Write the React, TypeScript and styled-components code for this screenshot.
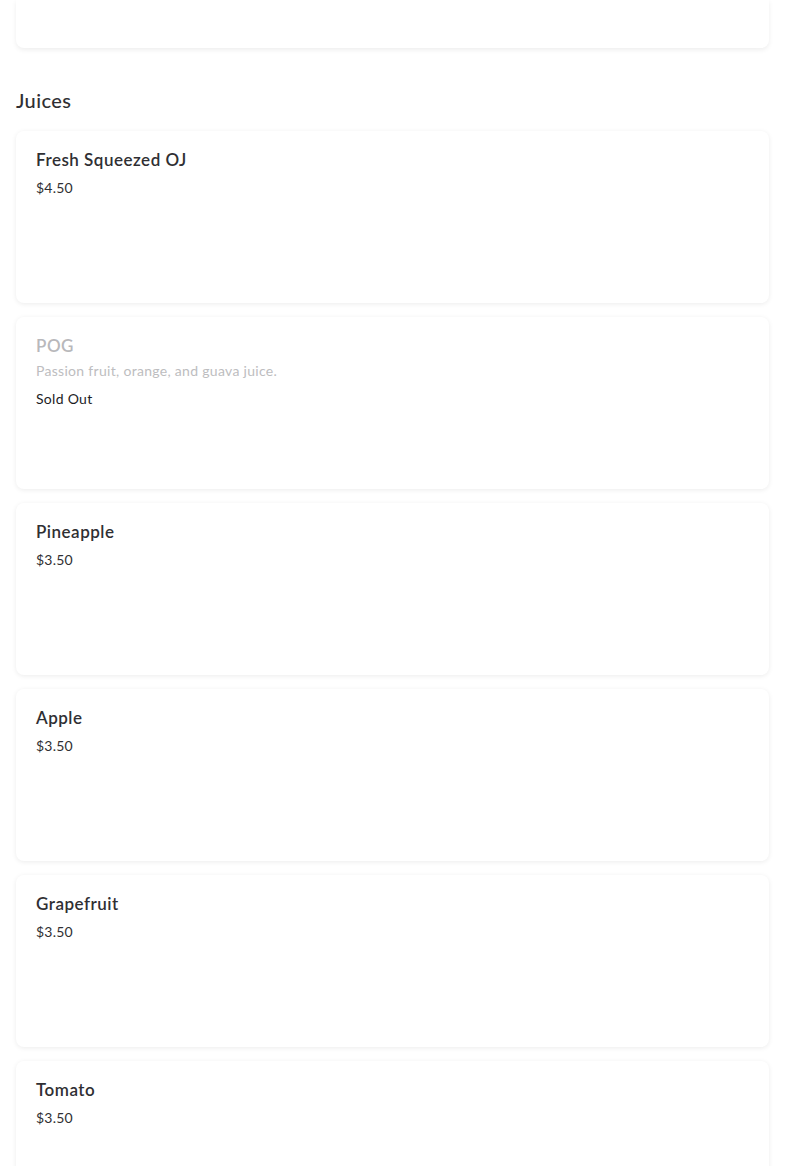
import React from "react";
import styled, { createGlobalStyle } from "styled-components";

const Global = createGlobalStyle`
  html, body { margin: 0; padding: 0; background: #ffffff; }
  body { font-family: Lato, "Open Sans", "Liberation Sans", sans-serif; color: #2f2f33; }
`;

const Page = styled.div`
  padding: 0 16px 40px;
  display: flex;
  flex-direction: column;
`;

const PartialCard = styled.div`
  height: 48px;
  background: #fff;
  border-radius: 0 0 8px 8px;
  box-shadow: 0 2px 5px rgba(0, 0, 0, 0.07);
`;

const Section = styled.section`
  display: flex;
  flex-direction: column;
  gap: 14px;
`;

const SectionTitle = styled.h2`
  margin: 38px 0 3px;
  font-size: 20px;
  line-height: 28px;
  font-weight: 500;
  letter-spacing: 0.4px;
  color: #2f2f33;
`;

const Card = styled.div`
  box-sizing: border-box;
  min-height: 172px;
  background: #fff;
  border-radius: 8px;
  box-shadow: 0 1px 5px rgba(0, 0, 0, 0.08);
  padding: 17px 20px;
  display: flex;
  flex-direction: column;
`;

const Name = styled.div<{ $disabled?: boolean }>`
  font-size: 17px;
  line-height: 24px;
  font-weight: 600;
  letter-spacing: 0.5px;
  color: ${(p) => (p.$disabled ? "#b8b8bb" : "#2f2f33")};
`;

const Desc = styled.div`
  margin-top: 2px;
  font-size: 14px;
  line-height: 22px;
  letter-spacing: 0.3px;
  color: #bdbdc0;
`;

const Price = styled.div`
  margin-top: 4px;
  font-size: 14px;
  line-height: 24px;
  letter-spacing: 0.2px;
  color: #2f2f33;
`;

const SoldOut = styled.div`
  margin-top: 5px;
  font-size: 14px;
  line-height: 24px;
  letter-spacing: 0.3px;
  color: #1c1c1f;
`;

type Item = { name: string; price?: string; desc?: string; soldOut?: boolean };

const items: Item[] = [
  { name: "Fresh Squeezed OJ", price: "$4.50" },
  { name: "POG", desc: "Passion fruit, orange, and guava juice.", soldOut: true },
  { name: "Pineapple", price: "$3.50" },
  { name: "Apple", price: "$3.50" },
  { name: "Grapefruit", price: "$3.50" },
  { name: "Tomato", price: "$3.50" },
];

export default function App() {
  return (
    <>
      <Global />
      <Page>
        <PartialCard />
        <Section>
          <SectionTitle>Juices</SectionTitle>
          {items.map((it) => (
            <Card key={it.name}>
              <Name $disabled={it.soldOut}>{it.name}</Name>
              {it.desc && <Desc>{it.desc}</Desc>}
              {it.soldOut ? <SoldOut>Sold Out</SoldOut> : <Price>{it.price}</Price>}
            </Card>
          ))}
        </Section>
      </Page>
    </>
  );
}
